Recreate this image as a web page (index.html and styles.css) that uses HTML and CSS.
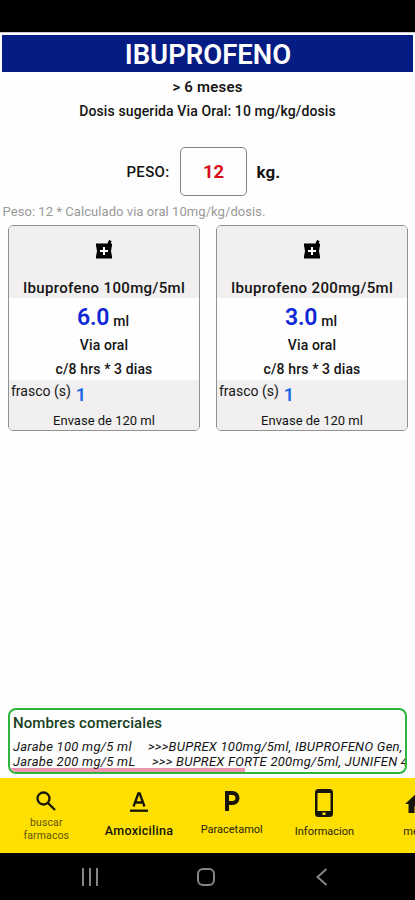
FILE: index.html
```html
<!DOCTYPE html>
<html lang="es">
<head>
<meta charset="utf-8">
<title>Ibuprofeno</title>
<link rel="stylesheet" href="styles.css">
</head>
<body>
<div class="status"></div>
<main class="content">
  <h1 class="title"><span>IBUPROFENO</span></h1>
  <p class="age">&gt; 6 meses</p>
  <p class="dose">Dosis sugerida Via Oral: 10 mg/kg/dosis</p>
  <div class="weight">
    <span class="weight-label">PESO:</span>
    <span class="weight-field">12</span>
    <span class="weight-unit">kg.</span>
  </div>
  <p class="note">Peso: 12 * Calculado via oral 10mg/kg/dosis.</p>
  <div class="cards">
    <section class="card">
      <header class="card-head">
        <svg class="pharmacy" viewBox="0 0 18 19"><path d="M1 3.500h11.500l1.500-3.500 2.600 1-1 2.500H17v2l-1 5.500 1 5.500v2H1v-2l1-5.500-1-5.500z"/><path class="cross" d="M8 7h2v3h3v2h-3v3H8v-3H5v-2h3z"/></svg>
        <h2>Ibuprofeno 100mg/5ml</h2>
      </header>
      <p class="amount"><b>6.0</b> <span>ml</span></p>
      <p class="route">Via oral</p>
      <p class="freq">c/8 hrs * 3 dias</p>
      <footer class="card-foot">
        <p class="bottles"><span>frasco (s)</span><b>1</b></p>
        <p class="pack">Envase de 120 ml</p>
      </footer>
    </section>
    <section class="card">
      <header class="card-head">
        <svg class="pharmacy" viewBox="0 0 18 19"><path d="M1 3.500h11.500l1.500-3.500 2.600 1-1 2.500H17v2l-1 5.500 1 5.500v2H1v-2l1-5.500-1-5.500z"/><path class="cross" d="M8 7h2v3h3v2h-3v3H8v-3H5v-2h3z"/></svg>
        <h2>Ibuprofeno 200mg/5ml</h2>
      </header>
      <p class="amount"><b>3.0</b> <span>ml</span></p>
      <p class="route">Via oral</p>
      <p class="freq">c/8 hrs * 3 dias</p>
      <footer class="card-foot">
        <p class="bottles"><span>frasco (s)</span><b>1</b></p>
        <p class="pack">Envase de 120 ml</p>
      </footer>
    </section>
  </div>
  <section class="brands">
    <h3>Nombres comerciales</h3>
    <div class="scroll"></div>
    <p class="brand"><span class="form">Jarabe 100 mg/5 ml</span><span class="names names-a">&gt;&gt;&gt;BUPREX 100mg/5ml, IBUPROFENO Gen,</span></p>
    <p class="brand"><span class="form">Jarabe 200 mg/5 mL</span><span class="names names-b">&gt;&gt;&gt; BUPREX FORTE 200mg/5ml, JUNIFEN 4</span></p>
  </section>
</main>
<nav class="tabs">
  <a class="tab search"><svg viewBox="0 0 20 20"><circle cx="7.500" cy="7.500" r="6"/><path d="M12 12l7 7"/></svg><span>buscar<br>farmacos</span></a>
  <a class="tab amox"><svg viewBox="0 0 18 20"><path d="M3.500 14.500L8.300 1.500h1.400l4.800 13M5.300 10.500h7.400"/><path d="M0 18.700h18"/></svg><span>Amoxicilina</span></a>
  <a class="tab para"><svg viewBox="0 0 16 20"><path d="M3 20V2h5.500a4.500 4.500 0 0 1 0 10H3"/></svg><span>Paracetamol</span></a>
  <a class="tab info"><svg viewBox="0 0 18 28"><path fill-rule="evenodd" d="M3.500 0h11A3.500 3.500 0 0 1 18 3.500v21a3.500 3.500 0 0 1-3.500 3.500h-11A3.500 3.500 0 0 1 0 24.500v-21A3.500 3.500 0 0 1 3.500 0zM2.500 4v18h13V4zM7.500 23.500v2.500h3v-2.500z"/></svg><span>Informacion</span></a>
  <a class="tab home"><svg viewBox="0 0 24 20"><path d="M12 0l12 11h-3.500v9h-6v-7h-5v7h-6v-9H0z"/></svg><span>menu</span></a>
</nav>
<div class="system">
  <svg viewBox="0 0 18 18"><path d="M2 0v18M9 0v18M16 0v18"/></svg>
  <svg viewBox="0 0 18 18"><rect x="1" y="1" width="16" height="16" rx="5"/></svg>
  <svg viewBox="0 0 18 18"><path d="M13.500 1l-9 8 9 8"/></svg>
</div>
</body>
</html>
```
FILE: styles.css
```css
* { box-sizing: border-box; margin: 0; padding: 0; }
body { width: 415px; height: 900px; overflow: hidden; background: #fefefe; color: #141414; font-family: Roboto, "Liberation Sans", sans-serif; display: flex; flex-direction: column; white-space: nowrap; }
.status { height: 32px; background: #000; flex: none; }
.content { height: 746px; display: flex; flex-direction: column; border-top: 1px solid #c8c8cf; padding-bottom: 4px; }
.title { height: 37px; margin: 2px 2px 0; padding-left: 1px; background: #041c83; color: #fff; font-size: 27.500px; line-height: 40px; font-weight: 600; text-align: center; }
.age { height: 24px; margin-top: 3px; line-height: 24px; font-size: 15px; font-weight: 600; letter-spacing: .2px; text-align: center; }
.dose { height: 22px; line-height: 24px; font-size: 14px; font-weight: 500; letter-spacing: .12px; text-align: center; }
.weight { display: grid; grid-template-columns: 44px 67px 26px; column-gap: 9.500px; margin: 26px 0 0 126.500px; height: 49px; align-items: center; font-size: 15px; font-weight: 500; }
.weight-label { letter-spacing: .3px; }
.weight-field { height: 49px; border: 1px solid #858585; border-radius: 5px; color: #d80e18; font-size: 18.500px; line-height: 49px; font-weight: 700; text-align: center; }
.weight-unit { font-size: 17px; font-weight: 700; }
.note { height: 20px; margin: 5px 0 0 2.500px; color: #999; font-size: 13px; line-height: 21px; letter-spacing: .06px; }
.cards { display: grid; grid-template-columns: 192px 192px; column-gap: 16px; margin: 4px 0 0 8px; }
.card { height: 206px; border: 1px solid #929292; border-radius: 5px; overflow: hidden; text-align: center; }
.card-head { height: 72px; background: #f1eff0; padding-top: 14px; }
.pharmacy { display: block; width: 18px; height: 19px; margin: 0 auto; }
.cross { fill: #fff; }
.card-head h2 { margin-top: 18px; font-size: 15px; line-height: 22px; font-weight: 500; letter-spacing: .35px; }
.amount { height: 37px; line-height: 36px; }
.amount b { position: relative; top: 2px; left: -1px; font-size: 23px; font-weight: 600; letter-spacing: -.2px; color: #1028d8; }
.amount span { position: relative; top: 3px; left: -1px; font-size: 14px; font-weight: 500; }
.route, .freq { font-size: 14px; font-weight: 500; letter-spacing: .12px; }
.route { height: 22px; line-height: 21px; }
.freq { height: 23px; line-height: 24px; }
.card-foot { height: 51px; background: #f1eff0; }
.bottles { display: flex; gap: 5px; height: 29px; padding-left: 2px; font-size: 14px; line-height: 23px; }
.bottles b { color: #1766e8; font-size: 18px; line-height: 30px; font-weight: 600; }
.pack { font-size: 13px; line-height: 23px; }
.brands { position: relative; height: 66px; margin: auto 8px 0; border: 2px solid #2eb43f; border-radius: 8px; padding: 2px 0 0 3px; overflow: hidden; }
.brands h3 { color: #173f1d; font-size: 15px; line-height: 23px; font-weight: 500; letter-spacing: .1px; margin-bottom: 4px; }
.brand { position: relative; display: flex; height: 15px; line-height: 16px; font-size: 13px; letter-spacing: .27px; font-style: italic; }
.form { flex: none; width: 135px; }
.names-b { margin-left: 4px; }
.scroll { position: absolute; left: 0; bottom: 0; width: 235px; height: 4px; background: #ed93ad; }
.tabs { display: grid; grid-template-columns: repeat(5, 92.700px); height: 75px; overflow: hidden; background: #fddf02; flex: none; }
.tab { display: flex; flex-direction: column; align-items: center; }
.tab svg { display: block; flex: none; fill: none; stroke: #17150a; stroke-width: 2.300px; }
.tab span { font-size: 11px; color: #292408; text-align: center; }
.search svg { width: 20px; height: 20px; margin-top: 13px; }
.search span { line-height: 13px; margin-top: 5px; font-size: 10.500px; letter-spacing: .1px; color: #625508; }
.amox svg { width: 18px; height: 20px; margin-top: 14px; }
.amox span { margin-top: 10px; font-size: 12.500px; line-height: 17px; font-weight: 500; letter-spacing: .3px; color: #17150a; }
.tab.para svg { width: 16px; height: 20px; margin-top: 13px; stroke-width: 4px; }
.para span { margin-top: 10px; line-height: 17px; }
.tab.info svg { width: 18px; height: 28px; margin-top: 11px; fill: #17150a; stroke: none; }
.info span { margin-top: 6px; line-height: 17px; }
.tab.home svg { width: 24px; height: 20px; margin-top: 15px; fill: #17150a; stroke: none; }
.home span { margin-top: 10px; line-height: 17px; }
.system { flex: 1; display: grid; grid-template-columns: 18px 18px 18px; column-gap: 98px; padding: 15px 0 0 81px; background: #000; }
.system svg { width: 18px; height: 18px; fill: none; stroke: #858585; stroke-width: 2px; }
```
